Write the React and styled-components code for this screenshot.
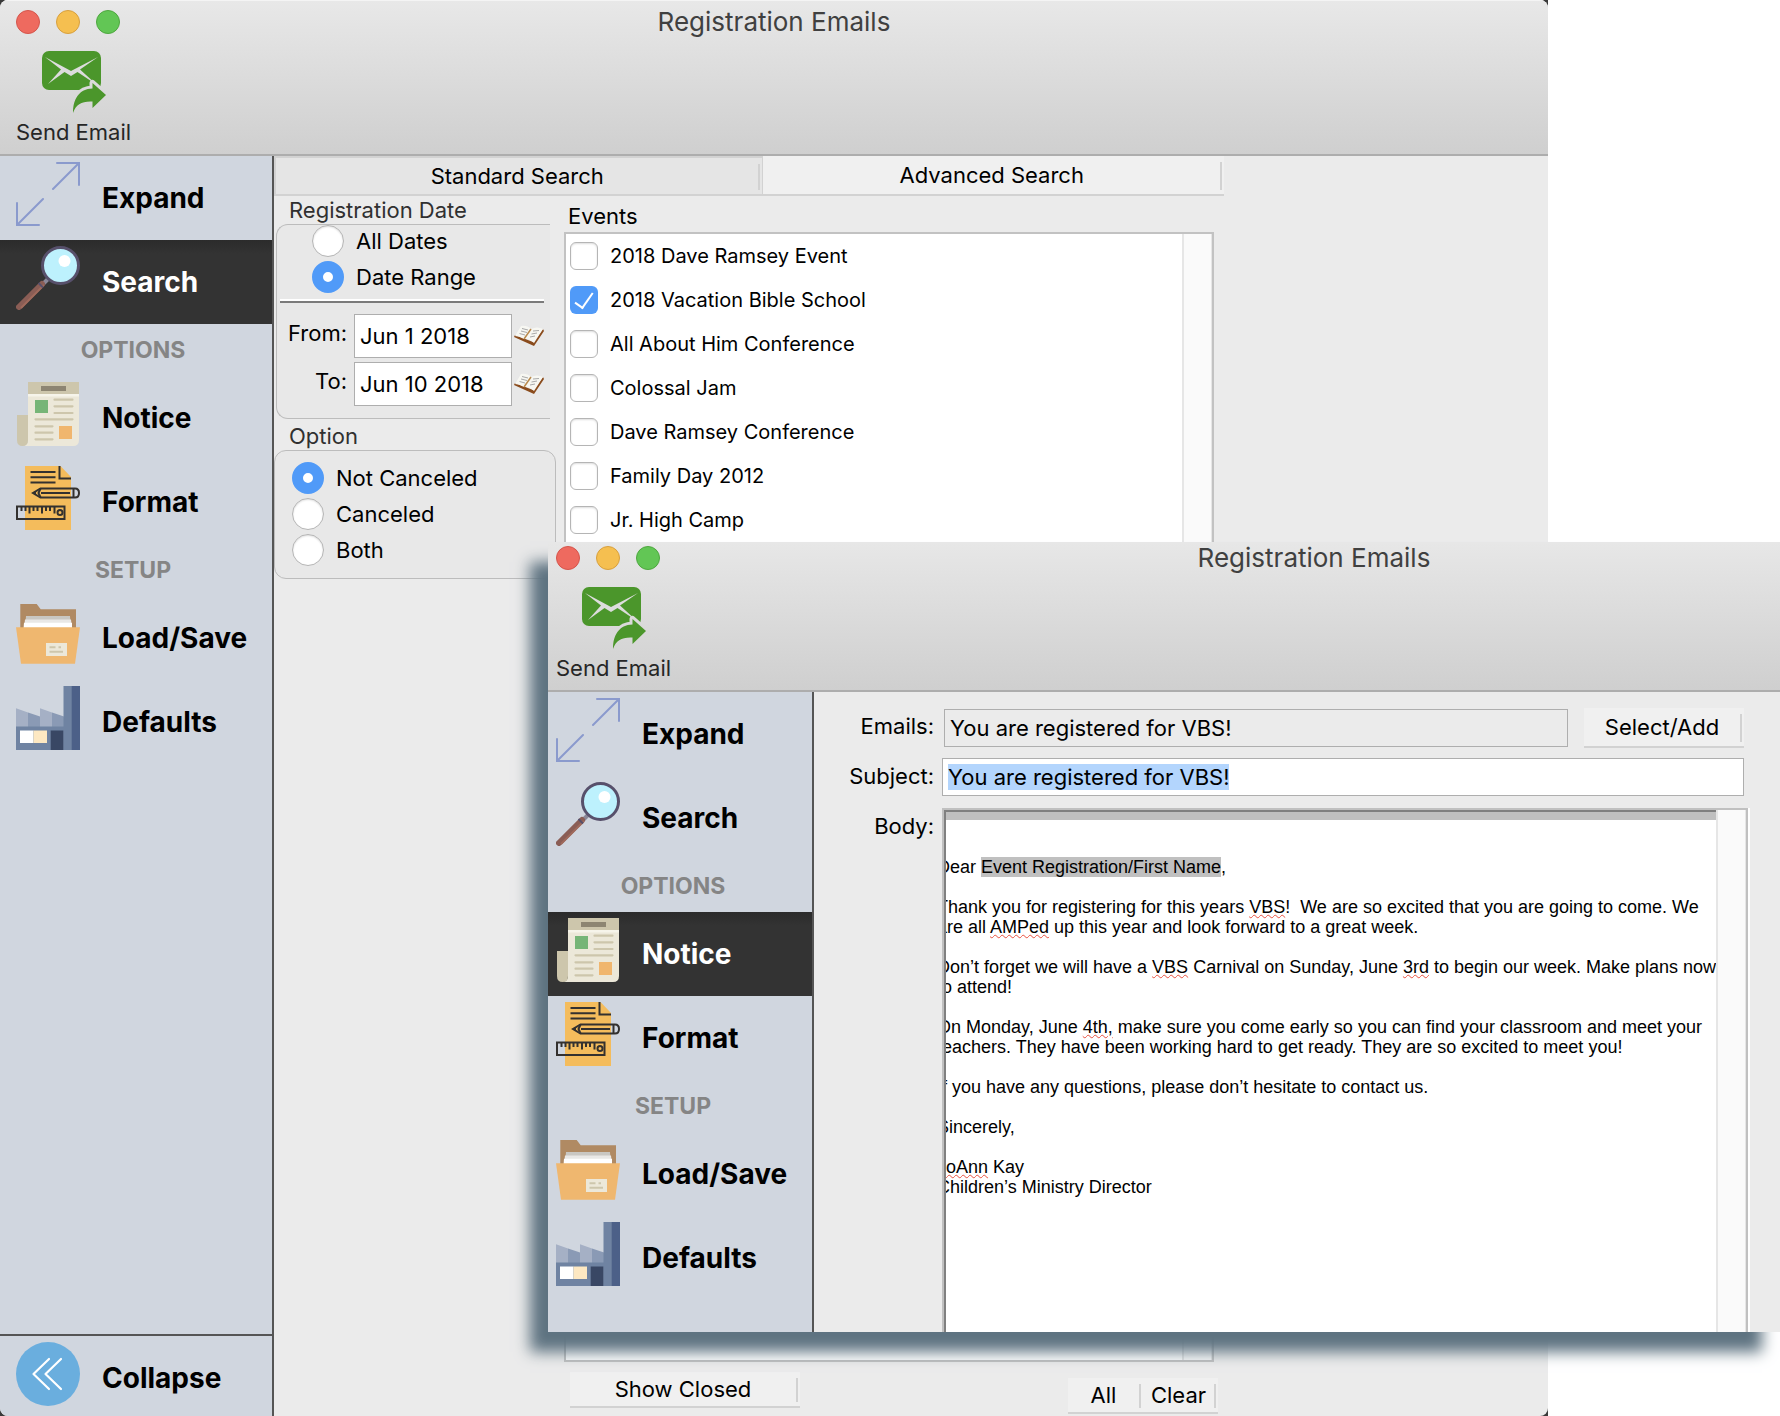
import { useEffect, useId, useRef, useState } from "react";
import styled, { createGlobalStyle } from "styled-components";

const EVENTS = [
  "2018 Dave Ramsey Event",
  "2018 Vacation Bible School",
  "All About Him Conference",
  "Colossal Jam",
  "Dave Ramsey Conference",
  "Family Day 2012",
  "Jr. High Camp",
];

const App = () => {
  return (
    <Desktop>
      <GlobalStyle />
      <BackWindow>
        <Header />
        <Main>
          <Sidebar active="Search" collapsible />
          <SearchPanel />
        </Main>
      </BackWindow>
      <FrontWindow>
        <Viewport>
          <Header />
          <Main>
            <Sidebar active="Notice" />
            <NoticePanel />
          </Main>
        </Viewport>
      </FrontWindow>
    </Desktop>
  );
};

export default App;

const Header = () => (
  <HeaderWrap>
    <TitleBar>
      <Lights>
        <Light aria-label="Close" $color="#ee6a5f" $edge="#d5554c" />
        <Light aria-label="Minimize" $color="#f5bf50" $edge="#d8a03e" />
        <Light aria-label="Zoom" $color="#62c655" $edge="#4ea73f" />
      </Lights>
      <Title>Registration Emails</Title>
    </TitleBar>
    <ToolButton>
      <SendIcon />
      Send Email
    </ToolButton>
  </HeaderWrap>
);

const Sidebar = ({ active, collapsible }) => {
  const item = (label, Icon) => (
    <NavItem $active={active === label}>
      <Icon />
      <span>{label}</span>
    </NavItem>
  );

  return (
    <SidebarWrap>
      <Nav>
        {item("Expand", ExpandIcon)}
        {item("Search", SearchIcon)}
        <NavHeading>OPTIONS</NavHeading>
        {item("Notice", NoticeIcon)}
        {item("Format", FormatIcon)}
        <NavHeading>SETUP</NavHeading>
        {item("Load/Save", FolderIcon)}
        {item("Defaults", FactoryIcon)}
      </Nav>
      {collapsible && <NavFooter>{item("Collapse", CollapseIcon)}</NavFooter>}
    </SidebarWrap>
  );
};

const SearchPanel = () => {
  const [range, setRange] = useState("Date Range");
  const [option, setOption] = useState("Not Canceled");
  const [checked, setChecked] = useState(["2018 Vacation Bible School"]);

  const toggle = (name) =>
    setChecked((list) =>
      list.includes(name) ? list.filter((n) => n !== name) : [...list, name]
    );

  return (
    <Panel>
      <Tabs>
        <Tab $selected>Standard Search</Tab>
        <Tab>Advanced Search</Tab>
      </Tabs>
      <Columns>
        <Filters>
          <GroupTitle>Registration Date</GroupTitle>
          <DateGroup role="radiogroup" aria-label="Registration Date">
            <RadioList $indent="35px">
              {["All Dates", "Date Range"].map((name) => (
                <RadioLabel key={name}>
                  <Radio
                    name="range"
                    checked={range === name}
                    onChange={() => setRange(name)}
                  />
                  {name}
                </RadioLabel>
              ))}
            </RadioList>
            <Divider />
            <DateRow>
              <label htmlFor="from">From:</label>
              <DateInput id="from" defaultValue="Jun 1 2018" />
              <BookIcon />
            </DateRow>
            <DateRow>
              <label htmlFor="to">To:</label>
              <DateInput id="to" defaultValue="Jun 10 2018" />
              <BookIcon />
            </DateRow>
          </DateGroup>
          <GroupTitle>Option</GroupTitle>
          <OptionGroup role="radiogroup" aria-label="Option">
            <RadioList $indent="17px">
              {["Not Canceled", "Canceled", "Both"].map((name) => (
                <RadioLabel key={name}>
                  <Radio
                    name="option"
                    checked={option === name}
                    onChange={() => setOption(name)}
                  />
                  {name}
                </RadioLabel>
              ))}
            </RadioList>
          </OptionGroup>
        </Filters>
        <EventsColumn>
          <EventsTitle>Events</EventsTitle>
          <EventsBox>
            <EventList>
              {EVENTS.map((name) => (
                <EventLabel key={name}>
                  <Checkbox
                    checked={checked.includes(name)}
                    onChange={() => toggle(name)}
                  />
                  {name}
                </EventLabel>
              ))}
            </EventList>
            <ScrollTrack />
          </EventsBox>
          <EventsFooter>
            <ShowClosed>Show Closed</ShowClosed>
            <ButtonPair>
              <FlatButton>All</FlatButton>
              <FlatButton>Clear</FlatButton>
            </ButtonPair>
          </EventsFooter>
        </EventsColumn>
      </Columns>
    </Panel>
  );
};

const NoticePanel = () => {
  const subject = useRef(null);

  useEffect(() => {
    subject.current.focus({ preventScroll: true });
    subject.current.select();
  }, []);

  return (
    <Panel>
      <Form>
        <FormLabel htmlFor="emails">Emails:</FormLabel>
        <EmailsRow>
          <EmailsInput id="emails" readOnly value="You are registered for VBS!" />
          <SelectAdd>Select/Add</SelectAdd>
        </EmailsRow>
        <FormLabel htmlFor="subject">Subject:</FormLabel>
        <SubjectInput
          id="subject"
          ref={subject}
          defaultValue="You are registered for VBS!"
        />
        <FormLabel as="span" id="body-label">
          Body:
        </FormLabel>
        <Editor>
          <EditorPage>
            <EditorText
              role="textbox"
              aria-multiline="true"
              aria-labelledby="body-label"
              contentEditable
              suppressContentEditableWarning
              spellCheck={false}
            >
              <p>
                Dear <Merge>Event Registration/First Name</Merge>,
              </p>
              <p>
                Thank you for registering for this years <Typo>VBS</Typo>!{"  "}
                We are so excited that you are going to come. We{"\n"}are all{" "}
                <Typo>AMPed</Typo> up this year and look forward to a great week.
              </p>
              <p>
                Don’t forget we will have a <Typo>VBS</Typo> Carnival on Sunday,
                June <Typo>3rd</Typo> to begin our week. Make plans now{"\n"}to
                attend!
              </p>
              <p>
                On Monday, June <Typo>4th,</Typo> make sure you come early so you
                can find your classroom and meet your{"\n"}teachers. They have
                been working hard to get ready. They are so excited to meet you!
              </p>
              <p>
                If you have any questions, please don’t hesitate to contact us.
              </p>
              <p>Sincerely,</p>
              <p>
                <Typo>JoAnn</Typo> Kay{"\n"}Children’s Ministry Director
              </p>
            </EditorText>
          </EditorPage>
          <ScrollTrack />
        </Editor>
      </Form>
    </Panel>
  );
};

/* icons */

const SendIcon = () => {
  const id = useId();
  const arrow =
    "M64 45L50.500 33V38.500C37 39 31 49 31 63C34 54 40 51 50.500 51.500V58Z";
  return (
    <svg width="64" height="64" viewBox="0 0 64 64" aria-hidden="true">
      <mask id={id}>
        <rect width="64" height="64" fill="#fff" />
        <path d="M3 7L29 21L56 7L38 19.500L55 35L35.500 22L29 26L22.500 22L6 34L19 19.500Z" />
        <path d={arrow} stroke="#000" strokeWidth="6" strokeLinejoin="round" />
      </mask>
      <rect
        y="1"
        width="59"
        height="39"
        rx="7"
        fill="#4b962b"
        mask={`url(#${id})`}
      />
      <path d={arrow} fill="#4b962b" />
    </svg>
  );
};

const ExpandIcon = () => (
  <svg width="64" height="64" viewBox="0 0 64 64" aria-hidden="true">
    <path
      d="M41 1H63V23M63 1L37 27M1 41V63H23M1 63L27 37"
      fill="none"
      stroke="#8a9acd"
      strokeWidth="2"
      strokeLinecap="round"
    />
  </svg>
);

const SearchIcon = () => (
  <svg width="64" height="64" viewBox="0 0 64 64" aria-hidden="true">
    <path d="M27 38L34 31" stroke="#8a8797" strokeWidth="4" />
    <path
      d="M3 61L26 38"
      stroke="#8a5d55"
      strokeWidth="6"
      strokeLinecap="round"
    />
    <path d="M5 62L28 39" stroke="#9f6a5c" strokeWidth="2" />
    <path d="M22.500 37L27 41.500" stroke="#57506b" strokeWidth="2" />
    <circle
      cx="44.500"
      cy="19.500"
      r="18"
      fill="#bdf1fd"
      stroke="#57506b"
      strokeWidth="3"
    />
    <circle cx="48.500" cy="15" r="6" fill="#fff" />
  </svg>
);

const NoticeIcon = () => (
  <svg width="64" height="64" viewBox="0 0 64 64" aria-hidden="true">
    <path d="M12 0H63V58Q63 64 57 64H7Q12 63 12 58Z" fill="#ece8d9" />
    <path d="M1 33H12V58Q12 64 6.500 64Q1 64 1 58Z" fill="#cdc6ac" />
    <path d="M12 0H63V12H12Z" fill="#cdc6ac" />
    <path d="M12 12H63V14.500H12Z" fill="#f6f4ea" />
    <path d="M25 4H50V9H25Z" fill="#8d8572" />
    <path d="M19 18H32V31H19Z" fill="#76b577" />
    <path d="M43 44H56V57H43Z" fill="#f0b66e" />
    <path
      d="M38.500 17.700H56.500M38.500 24.300H56.500M38.500 31H56.500M19.500 37.300H56.500M19.500 44.300H36.500M19.500 50.700H36.500M19.500 57.300H36.500"
      stroke="#cdc6ac"
      strokeWidth="2.200"
      strokeLinecap="round"
    />
  </svg>
);

const FormatIcon = () => (
  <svg width="64" height="64" viewBox="0 0 64 64" aria-hidden="true">
    <path d="M9 0H44.500L55 11V64H9Z" fill="#f4bc5c" />
    <g fill="none" stroke="#33312f" strokeWidth="2">
      <path d="M14.500 6H39.500M14.500 11.300H39.500M14.500 16.500H39.500M43.500 0V12.500H55" />
      <path d="M24.500 22.500H59Q63 22.500 63 27Q63 31.500 59 31.500H24.500L17 27Z" />
      <path d="M25 27H54M57.500 22.500V31.500M24.500 22.500L22.500 27L24.500 31.500" />
      <path d="M1 40.500H48.500V53H1Z" />
      <path d="M5.500 41V45M9.500 41V45M13.500 41V47.500M17.500 41V45M21.500 41V45M26 41V47.500M30 41V45M34 41V45M38.500 41V47.500" />
      <circle cx="44" cy="46.500" r="2.500" />
    </g>
    <path d="M16.500 27L20 25V29Z" fill="#33312f" />
  </svg>
);

const FolderIcon = () => (
  <svg width="64" height="64" viewBox="0 0 64 64" aria-hidden="true">
    <path d="M4.300 2H20.700L24.700 7.300H60V27H4.300Z" fill="#b08a63" />
    <path d="M10 14H54L55 27H9Z" fill="#c9c7c2" />
    <path d="M9 17.500H55L56 27H8Z" fill="#e9e8e6" />
    <path d="M8 20.700H56V27H7.500Z" fill="#fff" />
    <path d="M0 25.300H64L59 61.700H5Z" fill="#efb76f" />
    <path d="M30 41H51V54H30Z" fill="#ece8d9" />
    <path
      d="M33.500 45.300H39.500M42.500 45.300H45M33.500 49.700H47"
      stroke="#cdc6ac"
      strokeWidth="2"
    />
  </svg>
);

const FactoryIcon = () => (
  <svg width="64" height="64" viewBox="0 0 64 64" aria-hidden="true">
    <path d="M0 22.300L12 26.500V41H0ZM24 22.300L36 26.500V41H24Z" fill="#a5b0c5" />
    <path d="M12 26.500L24 30.500V41H12ZM36 26.500L48 30.500V41H36Z" fill="#8a9ab5" />
    <path d="M0 40.500H47.500V0H56V64H0Z" fill="#6f83a2" />
    <path d="M55.700 0H64V64H55.700Z" fill="#4c6088" />
    <path d="M4 44.500H17.500V57H4Z" fill="#fff" />
    <path d="M17.500 44.500H31V57H17.500Z" fill="#fde8c2" />
    <path d="M34.700 44.500H47.300V64H34.700Z" fill="#394764" />
  </svg>
);

const CollapseIcon = () => (
  <svg width="64" height="64" viewBox="0 0 64 64" aria-hidden="true">
    <circle cx="32" cy="32" r="32" fill="#6aaede" />
    <path
      d="M33 17L17.500 32L33 47M45 17L29.500 32L45 47"
      fill="none"
      stroke="#fff"
      strokeWidth="2.200"
      strokeLinecap="round"
      strokeLinejoin="round"
    />
  </svg>
);

const BookIcon = () => (
  <svg width="32" height="22" viewBox="0 0 32 22" aria-hidden="true">
    <path d="M1 12L21 21L31 6L30 4L20 17L2 10Z" fill="#8a4b1c" />
    <path d="M2 11L8 1Q14 0 18 4Q24 1 30 4L21 18Q15 13 11 14Q6 11 2 11Z" fill="#f7f7f2" />
    <path d="M18 4L11 14" stroke="#b98a4d" strokeWidth="1.500" />
    <path
      d="M9 3.500L15 5M8 6L14 7.500M6.500 8.500L12 10M20 6L26 5.500M18.500 9L24 8M17 12L22 11"
      stroke="#a9a9a9"
    />
  </svg>
);

/* styles */

const font = `Inter, "Noto Sans", "Liberation Sans", sans-serif`;
const windowWidth = "calc(100vw - 232px)";

const GlobalStyle = createGlobalStyle`
  * {
    box-sizing: border-box;
  }

  body {
    margin: 0;
    background: #fff;
    color: #000;
    font: 22px/28px ${font};
  }

  h1, h2, h3, p {
    margin: 0;
    font-size: inherit;
    font-weight: inherit;
  }

  button, input {
    margin: 0;
    padding: 0;
    border: 0;
    border-radius: 0;
    background: none;
    color: inherit;
    font: inherit;
    outline: none;
  }

  ::selection {
    background: #b3d5fd;
    color: #000;
  }
`;

const Desktop = styled.div`
  position: relative;
  overflow: hidden;
  min-height: 100vh;
  display: flex;
  background: linear-gradient(
    to right,
    #3a3a3a ${windowWidth},
    #fff ${windowWidth}
  );
`;

const BackWindow = styled.div`
  width: ${windowWidth};
  display: flex;
  flex-direction: column;
  background: #ebebeb;
  border-radius: 8px;
  overflow: hidden;
`;

const FrontWindow = styled.div`
  position: absolute;
  top: 542px;
  right: 0;
  bottom: 84px;
  left: 548px;
  display: flex;
  background: #ebebeb;
  box-shadow: -18px 20px 14px #5e7381;
`;

/* shows the window without its outer rim */
const Viewport = styled.div`
  flex: 1;
  display: flex;
  flex-direction: column;
  overflow: hidden;

  > * {
    width: ${windowWidth};
    margin-left: -8px;
  }

  > :first-child {
    margin-top: -6px;
  }
`;

const HeaderWrap = styled.header`
  flex: none;
  height: 156px;
  background: linear-gradient(#e8e8e8, #cfcfcf);
  border-bottom: 2px solid #adadad;
  box-shadow: inset 0 1px #f4f4f4;
`;

const TitleBar = styled.div`
  display: grid;
  grid-template-columns: 1fr auto 1fr;
  align-items: center;
  height: 44px;
  padding: 0 16px;
`;

const Lights = styled.div`
  display: flex;
  gap: 16px;
`;

const Light = styled.button`
  width: 24px;
  height: 24px;
  border-radius: 50%;
  border: 1px solid ${(props) => props.$edge};
  background: ${(props) => props.$color};
`;

const Title = styled.h1`
  font-size: 26px;
  color: #404040;
`;

const ToolButton = styled.button`
  display: flex;
  flex-direction: column;
  align-items: center;
  gap: 4px;
  margin: 6px 16px 0;
  color: #262626;
`;

const Main = styled.div`
  flex: 1;
  display: flex;
  min-height: 0;
`;

const SidebarWrap = styled.aside`
  flex: none;
  width: 274px;
  display: flex;
  flex-direction: column;
  background: #d0d6df;
  border-right: 2px solid #555;
`;

const Nav = styled.nav`
  flex: 1;
`;

const NavItem = styled.button`
  display: flex;
  align-items: center;
  gap: 22px;
  width: 100%;
  height: 84px;
  padding: 0 16px;
  font-size: 28px;
  font-weight: 700;
  color: ${(props) => (props.$active ? "#fff" : "#000")};
  background: ${(props) =>
    props.$active ? "linear-gradient(#2b2b2b, #333 14px)" : "none"};

  svg {
    flex: none;
    align-self: flex-start;
    margin-top: 6px;
  }
`;

const NavHeading = styled.h2`
  height: 52px;
  padding-right: 6px;
  line-height: 52px;
  text-align: center;
  font-size: 23px;
  font-weight: 700;
  color: #858585;
`;

const NavFooter = styled.div`
  height: 82px;
  overflow: hidden;
  border-top: 2px solid #555;
`;

const Panel = styled.main`
  flex: 1;
  min-width: 0;
  display: flex;
  flex-direction: column;
`;

const Tabs = styled.div`
  display: flex;
  width: 950px;
  height: 40px;
  border-bottom: 2px solid #d2d2d2;
`;

const FlatButton = styled.button`
  display: flex;
  align-items: center;
  justify-content: center;
  background: #f0f0f0;

  &::after {
    content: "";
    align-self: stretch;
    margin: 6px 2px 4px auto;
    border-right: 2px solid #d2d2d2;
  }

  &::before {
    content: "";
    margin-right: auto;
  }
`;

const Tab = styled(FlatButton)`
  flex: ${(props) => (props.$selected ? 488 : 462)} 0 0;
  background: ${(props) => (props.$selected ? "#e5e5e5" : "#f0f0f0")};
  border: solid #d2d2d2;
  border-width: ${(props) => (props.$selected ? "2px 1px 0 2px" : "0")};
`;

const Columns = styled.div`
  flex: 1;
  display: flex;
  gap: 8px;
`;

const Filters = styled.section`
  width: 282px;
`;

const GroupTitle = styled.h3`
  height: 28px;
  padding-left: 15px;
  color: #303030;
`;

const DateGroup = styled.div`
  height: 195px;
  margin: 0 6px 3px 2px;
  border: 1px solid #bcbcbc;
  border-right: 0;
  border-radius: 12px 0 0 12px;
  background: #e8e8e8;
`;

const OptionGroup = styled.div`
  height: 129px;
  padding-top: 11px;
  border: 1px solid #bcbcbc;
  border-radius: 12px;
  background: #e8e8e8;
`;

const RadioList = styled.div`
  display: flex;
  flex-direction: column;
  gap: 4px;
  padding-left: ${(props) => props.$indent};
`;

const RadioLabel = styled.label`
  display: flex;
  align-items: center;
  gap: 12px;
  height: 32px;
`;

const Radio = styled.input.attrs({ type: "radio" })`
  appearance: none;
  width: 32px;
  height: 32px;
  border-radius: 50%;
  border: 1px solid #b5b5b5;
  background: #fff;
  box-shadow: inset 0 1px 2px #ddd;

  &:checked {
    border: 11px solid #509af8;
    box-shadow: none;
  }
`;

const Divider = styled.hr`
  height: 4px;
  margin: 6px 6px 11px 3px;
  border: solid;
  border-width: 2px 0;
  border-color: #fff transparent #7b7b7b;
`;

const DateRow = styled.div`
  display: flex;
  align-items: center;
  gap: 1px;
  margin-bottom: 4px;

  label {
    width: 76px;
    padding: 0 6px 6px 0;
    text-align: right;
  }
`;

const DateInput = styled.input`
  width: 158px;
  height: 44px;
  padding-left: 5px;
  border: 1px solid #aeaeae;
  background: #fff;
`;

const EventsColumn = styled.section`
  display: flex;
  flex-direction: column;
  width: 650px;
`;

const EventsTitle = styled.h3`
  padding: 6px 4px 2px;
`;

const EventsBox = styled.div`
  flex: 1;
  display: flex;
  background: #fff;
  border: 2px solid #c2c2c2;
`;

const EventList = styled.div`
  flex: 1;
`;

const EventLabel = styled.label`
  display: flex;
  align-items: center;
  gap: 12px;
  height: 44px;
  padding-left: 4px;
  font-size: 20px;
`;

const Checkbox = styled.input.attrs({ type: "checkbox" })`
  appearance: none;
  display: grid;
  place-items: center;
  width: 28px;
  height: 28px;
  border-radius: 6px;
  border: 1px solid #b5b5b5;
  background: #fff;
  box-shadow: inset 0 1px 2px #ddd;

  &:checked {
    border: 0;
    background: #509af8;
    box-shadow: none;
  }

  &:checked::before {
    content: "";
    width: 8px;
    height: 17px;
    margin-bottom: 4px;
    border: solid #fff;
    border-width: 0 2px 2px 0;
    transform: rotate(35deg);
  }
`;

const ScrollTrack = styled.div`
  width: 30px;
  background: #fafafa;
  border: solid #e6e6e6;
  border-width: 0 1px 0 2px;
`;

const EventsFooter = styled.div`
  display: flex;
  justify-content: space-between;
  height: 54px;
  margin-right: -4px;
  padding: 10px 0 2px 6px;
`;

const ShowClosed = styled(FlatButton)`
  width: 230px;
  height: 36px;
  border-bottom: 2px solid #d2d2d2;
`;

const ButtonPair = styled.div`
  align-self: flex-end;
  display: grid;
  grid-template-columns: 1fr 1fr;
  width: 150px;
  height: 36px;
  border-bottom: 2px solid #d2d2d2;
`;

const Form = styled.form`
  flex: 1;
  display: grid;
  grid-template-columns: 120px 806px;
  grid-template-rows: 40px 40px 1fr;
  column-gap: 8px;
  row-gap: 10px;
  padding-top: 16px;
`;

const FormLabel = styled.label`
  padding-top: 4px;
  text-align: right;
`;

const TextInput = styled.input`
  height: 38px;
  padding: 0 5px;
  border: 1px solid #aeaeae;
  line-height: 30px;
`;

const EmailsRow = styled.div`
  display: flex;
  align-items: center;
  gap: 16px;
  padding: 0 4px 0 2px;
`;

const EmailsInput = styled(TextInput)`
  flex: 1;
`;

const SelectAdd = styled(FlatButton).attrs({ type: "button" })`
  width: 160px;
  height: 40px;
  border-bottom: 2px solid #d2d2d2;
`;

const SubjectInput = styled(TextInput)`
  width: 802px;
  background: #fff;
`;

const Editor = styled.div`
  display: flex;
  overflow: hidden;
  background: #fff;
  border: 2px solid #c0c0c0;
  border-width: 2px 2px 0;
  box-shadow: 2px 0 #fff;
`;

const EditorPage = styled.div`
  flex: 1;
  min-width: 0;
  overflow: hidden;
  border: solid #808080;
  border-width: 2px 0 0 2px;
`;

const EditorText = styled.div`
  padding-top: 37px;
  border-top: 8px solid #c0c0c0;
  font: 18px/20px "Liberation Sans", Arial, sans-serif;
  white-space: pre;
  outline: none;

  /* the page is scrolled a little to the right */
  p {
    margin: 0 0 20px -9px;
  }
`;

const Merge = styled.span`
  background: #c0c0c0;
`;

const Typo = styled.span`
  text-decoration: underline wavy #e8503f 1px;
  text-underline-offset: 1px;
`;
